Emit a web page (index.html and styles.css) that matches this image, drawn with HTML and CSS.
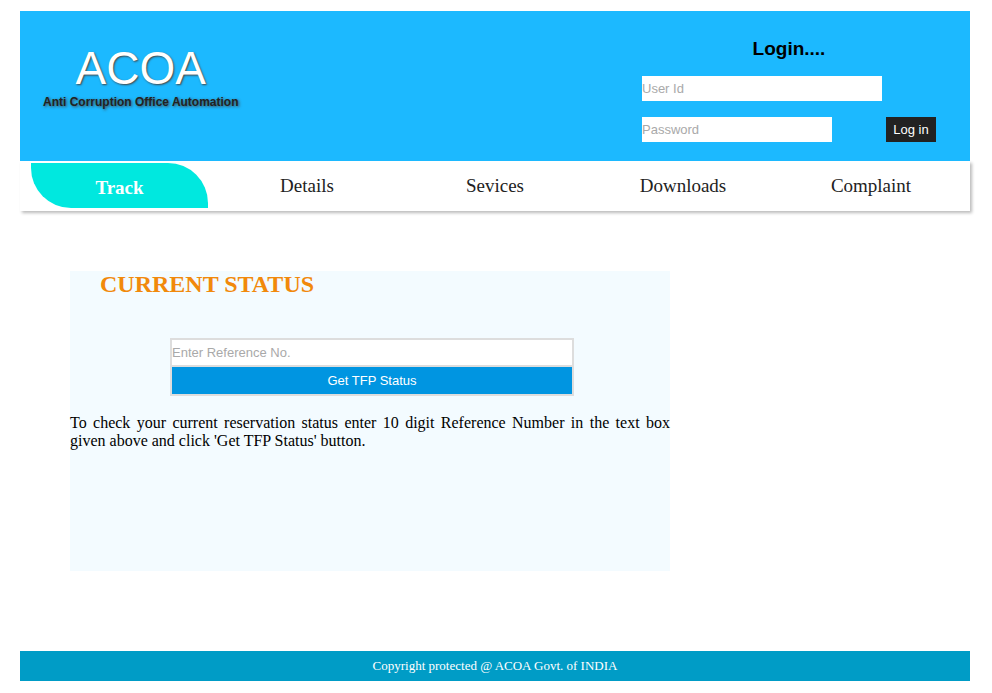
FILE: index.html
```html
<!DOCTYPE html>
<html lang="en">
<head>
<meta charset="utf-8">
<title>ACOA</title>
<link rel="stylesheet" href="styles.css">
</head>
<body>
<header class="header">
  <div class="brand">
    <h1 class="brand-name">ACOA</h1>
    <p class="brand-tagline">Anti Corruption Office Automation</p>
  </div>
  <form class="login">
    <h2 class="login-title">Login....</h2>
    <input class="field field-user" type="text" placeholder="User Id" aria-label="User Id">
    <div class="login-row">
      <input class="field field-password" type="password" placeholder="Password" aria-label="Password">
      <button class="login-button" type="button">Log in</button>
    </div>
  </form>
</header>
<nav class="nav">
  <a class="nav-link nav-link-active" href="#">Track</a>
  <a class="nav-link" href="#">Details</a>
  <a class="nav-link" href="#">Sevices</a>
  <a class="nav-link" href="#">Downloads</a>
  <a class="nav-link" href="#">Complaint</a>
</nav>
<main class="status">
  <h2 class="status-title">CURRENT STATUS</h2>
  <form class="status-form">
    <input class="status-input" type="text" placeholder="Enter Reference No." aria-label="Reference number">
    <button class="status-button" type="button">Get TFP Status</button>
  </form>
  <p class="status-text">To check your current reservation status enter 10 digit Reference Number in the text box given above and click 'Get TFP Status' button.</p>
</main>
<footer class="footer">Copyright protected @ ACOA Govt. of INDIA</footer>
</body>
</html>
```
FILE: styles.css
```css
* {
  box-sizing: border-box;
}

body {
  margin: 0;
  padding: 11px 22px 12px 20px;
  background: #fff;
  color: #000;
  font-family: "Liberation Serif", "Times New Roman", serif;
  font-size: 16px;
}

h1, h2, p {
  margin: 0;
}

input, button {
  margin: 0;
  border: 0;
  border-radius: 0;
  font-family: "Liberation Sans", Arial, sans-serif;
  font-size: 13px;
}

input::placeholder {
  color: #a9a9a9;
  opacity: 1;
}

/* Sits above the shadow cast by the navigation bar */
.header {
  position: relative;
  z-index: 1;
  display: flex;
  justify-content: space-between;
  min-height: 150px;
  padding: 0 34px 0 23px;
  background: #1cb9ff;
  font-family: "Liberation Sans", Arial, sans-serif;
}

.brand {
  padding-top: 32px;
  text-align: center;
}

.brand-name {
  color: #fff;
  font-size: 46px;
  font-weight: 400;
  line-height: 50px;
  text-shadow: 1px 1px 2px #444;
}

.brand-tagline {
  color: #222;
  font-size: 12px;
  font-weight: 700;
  line-height: 18px;
  text-shadow: 1px 1px 3px #444;
}

.login {
  width: 294px;
  padding-top: 26px;
}

.login-title {
  margin-bottom: 15px;
  font-size: 19px;
  line-height: 24px;
  text-align: center;
}

.field {
  display: block;
  height: 25px;
  padding: 0;
  background: #fff;
}

.field-user {
  width: 240px;
}

.field-password {
  width: 190px;
}

.login-row {
  display: flex;
  justify-content: space-between;
  margin-top: 16px;
}

.login-button {
  width: 50px;
  height: 25px;
  padding: 0;
  background: #222;
  color: #fff;
}

.nav {
  display: grid;
  grid-template-columns: repeat(5, 1fr);
  height: 50px;
  padding: 2px 5px;
  background: #fff;
  box-shadow: 2px 2px 3px #bbb;
}

.nav-link {
  color: #222;
  font-size: 19px;
  line-height: 46px;
  text-align: center;
  text-decoration: none;
}

.nav-link-active {
  height: 45px;
  margin: 0 5px 0 6px;
  border-radius: 0 40px 0 40px;
  background: #00e8df;
  color: #fff;
  font-weight: 700;
  line-height: 50px;
}

.status {
  width: 600px;
  max-width: calc(100% - 50px);
  min-height: 300px;
  margin: 60px 0 80px 50px;
  background: #f3fbff;
}

.status-title {
  padding-left: 30px;
  color: #f1890b;
  font-size: 24px;
  line-height: 27px;
}

.status-form {
  width: 404px;
  max-width: 100%;
  margin: 40px 0 18px 100px;
  border: 2px solid #ddd;
}

.status-input,
.status-button {
  display: block;
  width: 100%;
}

.status-input {
  height: 27px;
  padding: 0;
  border-bottom: 2px solid #ddd;
}

.status-button {
  height: 27px;
  padding: 0;
  background: #0095e1;
  color: #fff;
}

.status-text {
  line-height: 18px;
  text-align: justify;
}

.footer {
  background: #009cc6;
  color: #fff;
  font-size: 13px;
  line-height: 30px;
  text-align: center;
}
```
